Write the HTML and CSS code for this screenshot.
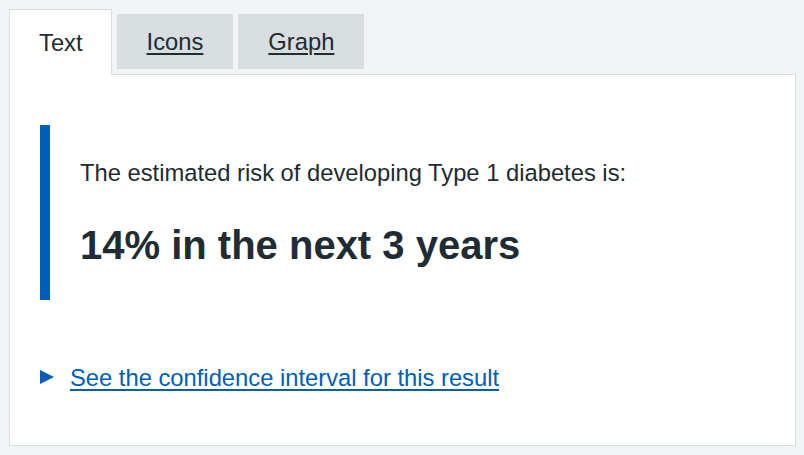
FILE: index.html
```html
<!DOCTYPE html>
<html lang="en">
<head>
    <meta charset="UTF-8">
    <meta name="viewport" content="width=device-width, initial-scale=1.0">
    <title>Risk result</title>
    <link rel="stylesheet" href="styles.css">
</head>
<body>
    <div class="page">
        <ul class="tabs">
            <li class="tab tab-selected"><a href="#text">Text</a></li>
            <li class="tab"><a href="#icons">Icons</a></li>
            <li class="tab"><a href="#graph">Graph</a></li>
        </ul>

        <div class="panel" id="text">
            <div class="inset-text">
                <p>The estimated risk of developing Type 1 diabetes is:</p>
                <h2>14% in the next 3 years</h2>
            </div>

            <details class="details">
                <summary><span class="summary-text">See the confidence interval for this result</span></summary>
            </details>
        </div>
    </div>
</body>
</html>
```

FILE: styles.css
```css
* {
    box-sizing: border-box;
    margin: 0;
    padding: 0;
}

body {
    background-color: #f0f4f5;
    color: #212b32;
    font-family: 'Liberation Sans', Arial, sans-serif;
    font-size: 23.75px;
    line-height: 35px;
}

.page {
    padding: 14px 8px 10px 9px;
}

/* tabs */
.tabs {
    list-style: none;
    display: flex;
    align-items: flex-start;
    gap: 5px;
}

.tab {
    background-color: #d8dde0;
    padding: 10px 30px;
}

.tab a {
    color: #212b32;
    text-decoration: underline;
    text-decoration-thickness: 2px;
    text-underline-offset: 3px;
}

.tab-selected {
    position: relative;
    background-color: #fff;
    border: 1px solid #d8dde0;
    border-bottom: 0;
    margin-top: -5px;
    margin-bottom: -1px;
    padding: 15px 28px 15px 29px;
}

.tab-selected a {
    text-decoration: none;
}

/* panel */
.panel {
    background-color: #fff;
    border: 1px solid #d8dde0;
    padding: 50px 30px 50px;
}

.inset-text {
    border-left: 10px solid #005eb8;
    padding: 30px;
    margin-bottom: 60px;
}

.inset-text p {
    margin-bottom: 30px;
}

.inset-text h2 {
    font-size: 40px;
    line-height: 50px;
    font-weight: 700;
}

/* details */
.details summary {
    list-style: none;
    position: relative;
    padding-left: 30px;
    color: #005eb8;
    cursor: pointer;
}

.details summary::-webkit-details-marker {
    display: none;
}

.details summary::before {
    content: '';
    position: absolute;
    left: 0;
    top: 10px;
    border-style: solid;
    border-width: 7.5px 0 7.5px 14px;
    border-color: transparent transparent transparent #005eb8;
}

.summary-text {
    text-decoration: underline;
    text-underline-offset: 3px;
}
```
